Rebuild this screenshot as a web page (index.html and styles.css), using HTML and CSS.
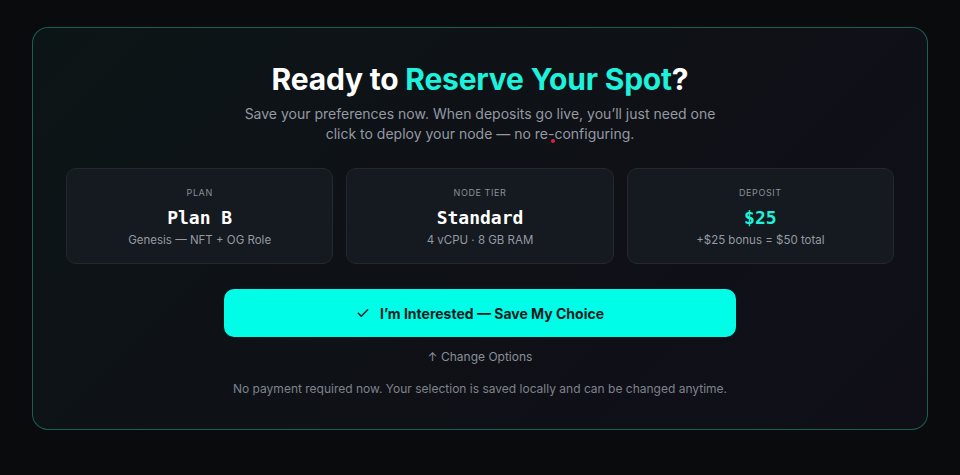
FILE: index.html
```html
<!DOCTYPE html>
<html lang="en">

<head>
    <meta charset="UTF-8">
    <meta name="viewport" content="width=device-width, initial-scale=1.0">
    <title>Reserve Your Spot</title>
    <link rel="stylesheet" href="styles.css">
</head>

<body>
    <section class="reserve">
        <h1 class="reserve-title">Ready to <span class="accent">Reserve Your Spot</span>?</h1>
        <p class="reserve-lead">
            Save your preferences now. When deposits go live, you’ll just need one
            click to deploy your node — no re-configuring.
        </p>
        <span class="red-dot"></span>

        <!-- Summary of the chosen options -->
        <div class="summary">
            <div class="summary-card">
                <span class="summary-label">Plan</span>
                <span class="summary-value">Plan B</span>
                <span class="summary-note">Genesis — NFT + OG Role</span>
            </div>
            <div class="summary-card">
                <span class="summary-label">Node Tier</span>
                <span class="summary-value">Standard</span>
                <span class="summary-note">4 vCPU · 8 GB RAM</span>
            </div>
            <div class="summary-card">
                <span class="summary-label">Deposit</span>
                <span class="summary-value accent">$25</span>
                <span class="summary-note">+$25 bonus = $50 total</span>
            </div>
        </div>

        <button class="save-btn" type="button">
            <svg width="14" height="14" viewBox="0 0 24 24" fill="none" stroke="currentColor" stroke-width="2.4" stroke-linecap="round" stroke-linejoin="round">
                <path d="M4 12.5l5 5L20 6.5"></path>
            </svg>
            I’m Interested — Save My Choice
        </button>

        <a href="#" class="change-link">↑ Change Options</a>

        <p class="reserve-foot">No payment required now. Your selection is saved locally and can be changed anytime.</p>
    </section>
</body>

</html>
```

FILE: styles.css
```css
/* Colours */
:root {
    --bg-color: #0a0b0d;
    --card-bg: #151920;
    --card-border: #242830;
    --text-color: #ffffff;
    --muted-color: #9499a2;
    --main-color: #00fde8;
    --accent-text: #1df2dc;
}

body {
    background: var(--bg-color);
    color: var(--text-color);
    font-family: Inter, "DejaVu Sans", sans-serif;
    margin: 0;
    padding: 27px 32px;
}

/* Main panel */
.reserve {
    position: relative;
    display: flex;
    flex-direction: column;
    align-items: center;
    padding: 32px 33px 32px;
    border: 1px solid rgba(40, 190, 160, 0.45);
    border-radius: 16px;
    background: linear-gradient(135deg, #0c1516 0%, #0f1117 55%, #100f18 100%);
}

.reserve-title {
    margin: 0;
    font-size: 30px;
    font-weight: 700;
    letter-spacing: -0.2px;
    line-height: 38px;
}

.accent {
    color: var(--accent-text);
}

.reserve-lead {
    margin: 6px 0 0;
    max-width: 490px;
    text-align: center;
    font-size: 14px;
    line-height: 20px;
    color: var(--muted-color);
}

/* stray marker under "re-configuring" */
.red-dot {
    position: absolute;
    left: 518px;
    top: 111px;
    width: 4px;
    height: 4px;
    border-radius: 50%;
    background: #e0203a;
}

/* Three option cards */
.summary {
    display: grid;
    grid-template-columns: repeat(3, 1fr);
    gap: 13px;
    width: 100%;
    margin-top: 24px;
}

.summary-card {
    display: flex;
    flex-direction: column;
    align-items: center;
    height: 96px;
    box-sizing: border-box;
    padding-top: 18px;
    background: var(--card-bg);
    border: 1px solid var(--card-border);
    border-radius: 10px;
}

.summary-label {
    font-size: 9px;
    letter-spacing: 0.6px;
    text-transform: uppercase;
    color: #8a8f98;
    line-height: 12px;
}

.summary-value {
    margin-top: 8px;
    font-family: "DejaVu Sans Mono", "Liberation Mono", monospace;
    font-size: 18px;
    font-weight: 700;
    line-height: 22px;
}

.summary-note {
    margin-top: 3px;
    font-size: 11.5px;
    line-height: 16px;
    color: var(--muted-color);
}

/* Call to action */
.save-btn {
    display: flex;
    align-items: center;
    justify-content: center;
    gap: 10px;
    width: 512px;
    height: 48px;
    margin-top: 25px;
    border: none;
    border-radius: 10px;
    background: var(--main-color);
    color: #0c1a1c;
    font-family: inherit;
    font-size: 14px;
    font-weight: 700;
    cursor: pointer;
}

.change-link {
    margin-top: 12px;
    font-size: 12px;
    line-height: 16px;
    color: #8a8f98;
    text-decoration: none;
}

.reserve-foot {
    margin: 16px 0 0;
    font-size: 12px;
    line-height: 16px;
    color: #7e838c;
}
```
